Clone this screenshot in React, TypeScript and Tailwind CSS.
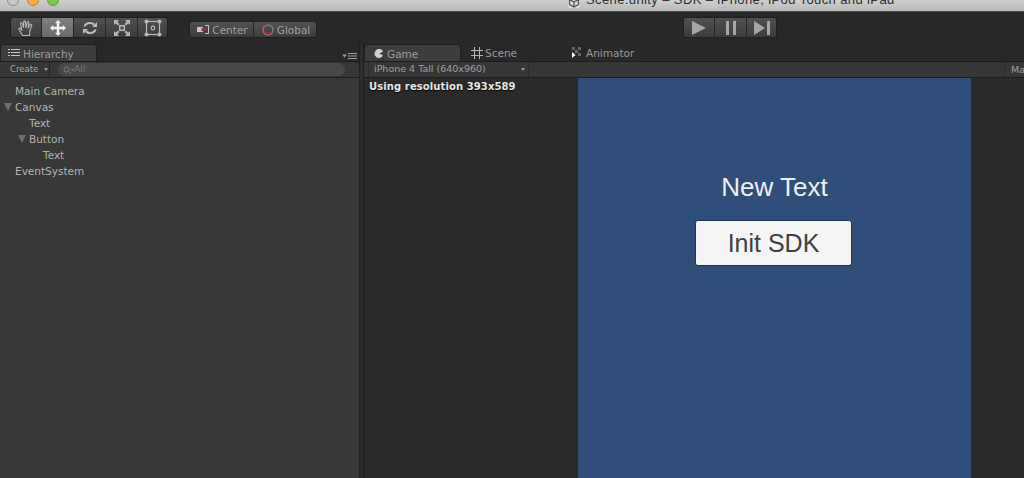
const font = { fontFamily: '"DejaVu Sans", sans-serif' };

const segment =
  'flex items-center justify-center border-r border-[#252525] last:border-r-0 bg-gradient-to-b from-[#515151] to-[#3c3c3c] h-full';

function HandIcon() {
  return (
    <svg width="18" height="18" viewBox="0 0 18 18" fill="none" stroke="#b4b4b4" strokeWidth="1.1" strokeLinejoin="round" strokeLinecap="round">
      <path d="M5.500 16.500 2 10.500c-.6-1.200 1-1.900 1.700-.9L5 11.500 3.600 4.800c-.2-1.200 1.500-1.500 1.800-.3L6.600 8.500 6.700 3c0-1.200 1.700-1.200 1.800 0L9 8.500l1.200-5c.3-1.100 1.900-.8 1.700.4L11 9l2.200-3.300c.7-.9 2-.1 1.500.9L13 11l-.5 5.500Z" />
    </svg>
  );
}

function MoveIcon() {
  return (
    <svg width="16" height="16" viewBox="0 0 16 16" fill="#f2f2f2">
      <path d="M8 0 11 3.200H9.200V6.800H12.800V5L16 8 12.800 11V9.200H9.200V12.800H11L8 16 5 12.800H6.800V9.200H3.200V11L0 8 3.200 5V6.800H6.800V3.200H5Z" />
    </svg>
  );
}

function RotateIcon() {
  return (
    <svg width="16" height="16" viewBox="0 0 16 16" fill="none" stroke="#bdbdbd" strokeWidth="2.200">
      <path d="M2.500 6.500C3.300 4 5.200 3 8 3c1.800 0 3 .6 4 1.600" />
      <path d="M13.500 9.500C12.700 12 10.800 13 8 13c-1.800 0-3-.6-4-1.600" />
      <path d="M15 2v5h-5ZM1 14V9h5Z" fill="#bdbdbd" stroke="none" />
    </svg>
  );
}

function ScaleIcon() {
  return (
    <svg width="18" height="18" viewBox="0 0 18 18" fill="#b8b8b8">
      <path fillRule="evenodd" d="M6 6h6v6H6ZM7.500 7.500v3h3v-3Z" />
      <path d="M1 1h5L4.300 2.700 6.500 5 5 6.500 2.700 4.300 1 6ZM17 1v5l-1.700-1.700L13 6.500 11.500 5l2.200-2.300L12 1ZM1 17v-5l1.700 1.700L5 11.500 6.500 13l-2.200 2.300L6 17ZM17 17h-5l1.700-1.700L11.500 13l1.500-1.500 2.300 2.200L17 12Z" />
    </svg>
  );
}

function RectIcon() {
  return (
    <svg width="18" height="18" viewBox="0 0 18 18" fill="none" stroke="#b8b8b8">
      <rect x="2.500" y="2.500" width="13" height="13" strokeWidth="1.200" />
      <circle cx="9" cy="9" r="1.800" strokeWidth="1.200" />
      <g fill="#b8b8b8" stroke="none">
        <circle cx="2.500" cy="2.500" r="2" />
        <circle cx="15.500" cy="2.500" r="2" />
        <circle cx="2.500" cy="15.500" r="2" />
        <circle cx="15.500" cy="15.500" r="2" />
      </g>
    </svg>
  );
}

function CenterIcon() {
  return (
    <svg width="12" height="10" viewBox="0 0 12 10">
      <rect x="0" y="2" width="6" height="5" fill="#c8c8c8" />
      <path d="M8 .5h3.500v8H8" fill="none" stroke="#c8c8c8" />
      <rect x="4.500" y="3" width="3" height="3" fill="#a82c36" />
    </svg>
  );
}

function GlobalIcon() {
  return (
    <svg width="12" height="12" viewBox="0 0 12 12" fill="none">
      <circle cx="6" cy="6" r="5" stroke="#8c8c8c" strokeWidth="1.100" />
      <path d="M3 2.500v6h6" stroke="#a82c36" strokeWidth="1.300" />
    </svg>
  );
}

function Tree({ label, indent, open }: { label: string; indent: string; open?: boolean }) {
  return (
    <div className={`relative h-4 text-[10.5px] leading-4 text-[#b4b4b4] ${indent}`}>
      {open ? (
        <span className="absolute top-[4px] -ml-[11px] h-0 w-0 border-x-[4px] border-t-[8px] border-x-transparent border-t-[#707070]" />
      ) : null}
      {label}
    </div>
  );
}

export default function App() {
  return (
    <div className="flex h-[478px] w-[1024px] flex-col overflow-hidden bg-[#282828]" style={font}>
      {/* mac title bar, cropped at the top of the shot */}
      <div className="flex h-3 shrink-0 items-end border-b border-[#4a4a4a] bg-gradient-to-b from-[#cfcfcf] to-[#b9b9b9]">
        <div className="ml-[7px] flex gap-2 pb-[5px]">
          <span className="h-3 w-3 rounded-full border border-[#8a8a8a] bg-[#c9c9c9]" />
          <span className="h-3 w-3 rounded-full border border-[#b9822d] bg-[#f0ab4b]" />
          <span className="h-3 w-3 rounded-full border border-[#5f9a3d] bg-[#7cc657]" />
        </div>
        <div className="ml-[509px] flex h-3 items-end pb-[3px]">
          <span className="mr-[6px] block h-3 w-3 rounded-[2px] bg-[#dcdcdc]">
            <svg width="12" height="12" viewBox="0 0 12 12" fill="none" stroke="#555" strokeWidth="1.300">
              <path d="M6 1 10.500 3.500V8.500L6 11 1.500 8.500V3.500ZM6 6V11M6 6 1.500 3.500M6 6 10.500 3.500" />
            </svg>
          </span>
          <span className="whitespace-nowrap text-[13px] leading-4 text-[#2e2e2e] [font-family:'Liberation_Sans',sans-serif] tracking-[0.39px]">
            Scene.unity – SDK – iPhone, iPod Touch and iPad
          </span>
        </div>
      </div>

      {/* toolbar */}
      <div className="flex h-8 shrink-0 items-start pt-[5px]">
        <div className="ml-[10px] flex h-[21px] w-[158px] overflow-hidden rounded-[3px] border border-[#1f1f1f]">
          <div className={`${segment} w-[31px]`}><HandIcon /></div>
          <div className="flex h-full w-[32px] items-center justify-center border-r border-[#252525] bg-gradient-to-b from-[#808080] to-[#6a6a6a]"><MoveIcon /></div>
          <div className={`${segment} w-[32px]`}><RotateIcon /></div>
          <div className={`${segment} w-[32px]`}><ScaleIcon /></div>
          <div className={`${segment} flex-1`}><RectIcon /></div>
        </div>
        <div className="ml-[21px] mt-1 flex h-[17px] w-[128px] overflow-hidden rounded-[3px] border border-[#1f1f1f] text-[10.5px] leading-[17px] text-[#a0a0a0]">
          <div className={`${segment} w-[64px] gap-[3px] pl-[2px] pt-[1px]`}><CenterIcon />Center</div>
          <div className={`${segment} flex-1 gap-[3px] pl-[2px] pt-[1px]`}><GlobalIcon />Global</div>
        </div>
        <div className="ml-[366px] flex h-[21px] w-[94px] overflow-hidden rounded-[3px] border border-[#1f1f1f]">
          <div className={`${segment} w-[31px]`}>
            <svg width="16" height="14" viewBox="0 0 16 14" fill="#a6a6a6"><path d="M1 0 15 7 1 14Z" /></svg>
          </div>
          <div className={`${segment} w-[32px]`}>
            <svg width="10" height="14" viewBox="0 0 10 14" fill="#a6a6a6"><path d="M0 0h3v14H0ZM7 0h3v14H7Z" /></svg>
          </div>
          <div className={`${segment} flex-1`}>
            <svg width="16" height="14" viewBox="0 0 16 14" fill="#a6a6a6"><path d="M0 0 11 7 0 14ZM13 0h3v14h-3Z" /></svg>
          </div>
        </div>
      </div>

      <div className="flex min-h-0 flex-1">
        {/* hierarchy panel */}
        <div className="flex w-[359px] shrink-0 flex-col">
          <div className="relative flex h-[17px] shrink-0">
            <div className="flex w-[97px] items-center gap-[3px] rounded-t-[3px] border border-b-0 border-[#1e1e1e] bg-[#3d3d3d] pl-[7px] pt-[3px] text-[10.5px] text-[#9c9c9c]">
              <svg width="12" height="8" viewBox="0 0 12 8" fill="#c8c8c8" className="-mt-[3px]">
                <path d="M0 0h2v1H0ZM3 0h9v1H3ZM0 3h2v1H0ZM3 3h9v1H3ZM0 6h2v1H0ZM3 6h9v1H3Z" />
              </svg>
              Hierarchy
            </div>
            <svg className="absolute right-[2px] top-[9px]" width="15" height="6" viewBox="0 0 15 6" fill="#a0a0a0">
              <path d="M0 1.500h5L2.500 4.500ZM6 0h9v1H6ZM6 2.500h9v1H6ZM6 5h9v1H6Z" />
            </svg>
          </div>
          <div className="flex h-[17px] shrink-0 items-center border-y border-[#1c1c1c] bg-[#363636]">
            <div className="flex h-full w-[50px] items-center border-r border-[#262626] pl-[10px] text-[8.5px] text-[#a8a8a8]">
              Create
              <span className="ml-[6px] h-0 w-0 border-x-[2.500px] border-t-[3px] border-x-transparent border-t-[#999]" />
            </div>
            <div className="ml-[8px] flex h-[13px] w-[287px] items-center rounded-full bg-[#484848] pl-[5px] text-[9px] text-[#777]">
              <svg width="11" height="8" viewBox="0 0 11 8" fill="none" stroke="#808080">
                <circle cx="3.500" cy="3.500" r="2.500" />
                <path d="M5.500 5.500 7.500 7.500" />
                <path d="M8 3h3L9.500 5Z" fill="#808080" stroke="none" />
              </svg>
              All
            </div>
          </div>
          <div className="flex-1 bg-[#383838] pt-[5px]">
            <Tree label="Main Camera" indent="pl-[15px]" />
            <Tree label="Canvas" indent="pl-[15px]" open />
            <Tree label="Text" indent="pl-[29px]" />
            <Tree label="Button" indent="pl-[29px]" open />
            <Tree label="Text" indent="pl-[43px]" />
            <Tree label="EventSystem" indent="pl-[15px]" />
          </div>
        </div>

        {/* splitter */}
        <div className="w-[5px] shrink-0 border-x border-[#1f1f1f] bg-[#2c2c2c]" />

        {/* game view */}
        <div className="flex min-w-0 flex-1 flex-col">
          <div className="flex h-[17px] shrink-0 items-center text-[10.5px] text-[#9c9c9c]">
            <div className="flex h-full w-[97px] items-center gap-[4px] rounded-t-[3px] border border-b-0 border-[#1e1e1e] bg-[#3d3d3d] pl-[9px] pt-[3px]">
              <svg width="9" height="9" viewBox="0 0 9 9" fill="#d0d0d0" className="-mt-[3px]">
                <path d="M9 2.500A4.500 4.500 0 1 0 9 6.500L5.500 4.500Z" />
              </svg>
              Game
            </div>
            <div className="ml-[10px] flex h-full items-center gap-[2px] pt-[3px]">
              <svg width="12" height="12" viewBox="0 0 12 12" stroke="#b5b5b5" className="-mt-[3px]">
                <path d="M3.500 0v12M8.500 0v12M0 3.500h12M0 8.500h12" />
              </svg>
              Scene
            </div>
            <div className="ml-[55px] flex h-full items-center gap-[5px] pt-[3px]">
              <svg width="9" height="11" viewBox="0 0 9 11" className="-mt-[3px]">
                <path d="M0 0h3v3H0ZM6 0h3v3H6ZM3 3h3v3H3ZM6 6h3v3H6Z" fill="#666" />
                <path d="M0 5 3.500 8 0 11Z" fill="#fff" />
              </svg>
              Animator
            </div>
          </div>
          <div className="flex h-[17px] shrink-0 items-center border-y border-[#1c1c1c] bg-[#363636] text-[9.500px] text-[#a0a0a0]">
            <div className="ml-[4px] flex h-full w-[161px] items-center border-x border-[#2a2a2a] pl-[5px]">
              iPhone 4 Tall (640x960)
              <span className="ml-auto mr-[3px] h-0 w-0 border-x-[2.500px] border-t-[3px] border-x-transparent border-t-[#999]" />
            </div>
            <div className="ml-auto h-full w-[20px] overflow-hidden border-l border-[#2a2a2a] pl-[6px] leading-[15px]">Ma</div>
          </div>
          <div className="relative flex min-h-0 flex-1 bg-[#2a2a2a]">
            <div className="absolute left-[5px] top-[1px] text-[10px] font-bold leading-4 tracking-[0.1px] text-[#e8e8e8] [text-shadow:0_1px_1px_#000]">
              Using resolution 393x589
            </div>
            <div className="ml-[214px] flex w-[393px] flex-col items-center bg-[#2f4e7a] pt-[95px] [font-family:'Liberation_Sans',sans-serif]">
              <div className="text-[26px] leading-7 text-[#eef0f4]">New Text</div>
              <div className="mr-[2px] mt-[19px] flex h-[46px] w-[157px] shrink-0 items-center justify-center rounded-[3px] border border-[#27344a] bg-[#f5f5f5] pt-[1px] text-[25px] text-[#404040]">
                Init SDK
              </div>
            </div>
          </div>
        </div>
      </div>
    </div>
  );
}
